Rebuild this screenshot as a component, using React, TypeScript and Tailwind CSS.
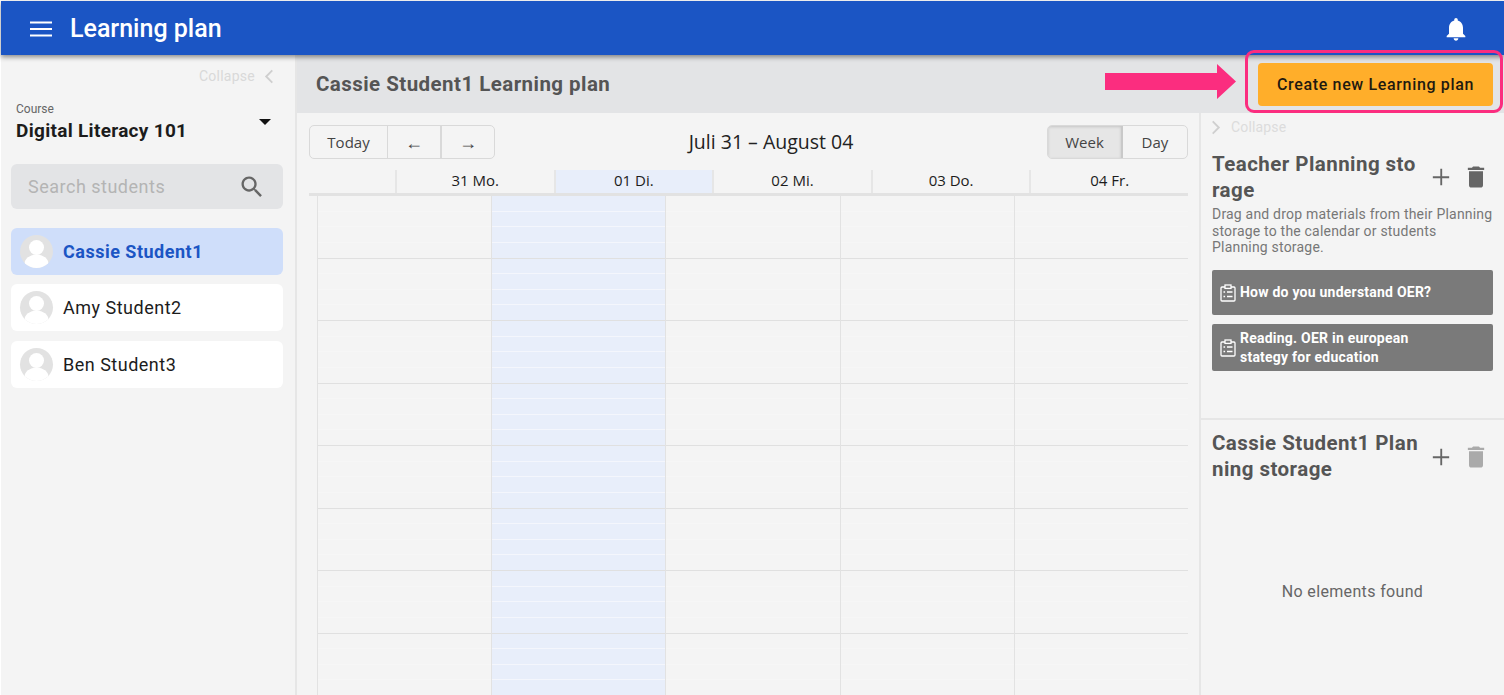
const slots = Array.from({ length: 36 });

function Person() {
  return (
    <span className="relative block w-[33px] h-[33px] rounded-full bg-[#e2e2e2] overflow-hidden shrink-0">
      <svg viewBox="0 0 33 33" className="w-[33px] h-[33px]" fill="#fff">
        <circle cx="16.5" cy="12.5" r="7.5" />
        <ellipse cx="16.5" cy="29" rx="12" ry="9.5" />
      </svg>
    </span>
  );
}

function Student({ name, active }: { name: string; active?: boolean }) {
  return (
    <div className={`flex items-center h-[47px] rounded-[6px] pl-[9px] gap-[10px] ${active ? "bg-[#cfdefa]" : "bg-white"}`}>
      <Person />
      <span className={`text-[18px] tracking-[0.5px] ${active ? "font-bold text-[#1b55c4]" : "text-[#1c1c1c]"}`}>{name}</span>
    </div>
  );
}

function Trash({ color }: { color: string }) {
  return (
    <svg viewBox="0 0 24 24" className="w-[28px] h-[28px]" fill={color}>
      <path d="M6 19c0 1.1.9 2 2 2h8c1.1 0 2-.9 2-2V7H6v12zM19 4h-3.5l-1-1h-5l-1 1H5v2h14V4z" />
    </svg>
  );
}

function Plus() {
  return (
    <svg viewBox="0 0 24 24" className="w-[28px] h-[28px]" fill="#666">
      <path d="M19 13h-6v6h-1.6v-6H5v-1.6h6.4V5H13v6.4h6z" />
    </svg>
  );
}

function Clipboard() {
  return (
    <svg viewBox="0 0 16 18" className="w-[16px] h-[18px] shrink-0" fill="none" stroke="#fff" strokeWidth="1.3">
      <rect x="1" y="3" width="14" height="14" rx="1" />
      <rect x="5" y="1" width="6" height="3.4" fill="#7a7a7a" />
      <path d="M3.5 8h1.6M7 8h5.5M3.5 12.5h1.6M7 12.5h5.5" />
    </svg>
  );
}

function Material({ children }: { children: React.ReactNode }) {
  return (
    <div className="flex items-center gap-[4px] bg-[#7a7a7a] rounded-[2px] px-[8px] pt-[5px] pb-[4px] min-h-[45px] text-white text-[14px] font-bold tracking-[0.23px] leading-[19px]">
      <Clipboard />
      <div>{children}</div>
    </div>
  );
}

function HeadCell({ label, today }: { label: string; today?: boolean }) {
  return (
    <div className={`flex-1 border-l-2 border-[#e6e6e6] text-center text-[15px] leading-[21px] pb-[2px] text-[#1c1c1c] ${today ? "bg-[#e8eefa]" : ""}`}>
      {label}
    </div>
  );
}

function DayCol({ today }: { today?: boolean }) {
  return (
    <div className={`flex-1 border-l border-[#e2e2e2] ${today ? "bg-[#e8eefa]" : ""}`}>
      {slots.map((_, i) => (
        <div
          key={i}
          className={`h-[15.625px] ${i % 4 === 3 ? "border-b border-[#e0e0e0]" : today ? "border-b border-[#f4f6fc]" : "border-b border-[#f6f6f6]"}`}
        />
      ))}
    </div>
  );
}

export default function App() {
  return (
    <div className="relative w-[1504px] h-[695px] overflow-hidden bg-white pl-px pt-px font-['Roboto',sans-serif]">
      <div className="h-full flex flex-col bg-[#f4f4f4]">
        {/* Top bar */}
        <header className="relative z-10 h-[54px] shrink-0 bg-[#1b55c4] flex items-center text-white pt-px pl-[29px] pr-[34px] shadow-[0_2px_5px_rgba(0,0,0,0.45)]">
          <svg viewBox="0 0 22 16" className="w-[22px] h-[16px]" fill="#fff">
            <rect y="0.5" width="22" height="2" />
            <rect y="7" width="22" height="2" />
            <rect y="13.5" width="22" height="2" />
          </svg>
          <span className="ml-[18px] text-[25px] font-medium">Learning plan</span>
          <svg viewBox="0 0 24 24" className="ml-auto w-[28px] h-[28px]" fill="#fff">
            <path d="M12 22c1.1 0 2-.9 2-2h-4c0 1.1.89 2 2 2zm6-6v-5c0-3.07-1.64-5.64-4.5-6.32V4c0-.83-.67-1.5-1.5-1.5s-1.5.67-1.5 1.5v.68C7.63 5.36 6 7.92 6 11v5l-2 2v1h16v-1l-2-2z" />
          </svg>
        </header>

        <div className="flex flex-1 min-h-0">
          {/* Left sidebar */}
          <aside className="w-[296px] shrink-0 border-r-2 border-[#e6e6e6] pl-[10px] pr-[12px]">
            <div className="flex items-center justify-end gap-[9px] h-[46px] pb-[3px] pr-[9px] text-[14px] tracking-[0.25px] text-[#d9d9d9]">
              Collapse
              <svg viewBox="0 0 10 16" className="w-[10px] h-[15px]" fill="none" stroke="#cfcfcf" strokeWidth="2">
                <path d="M8.5 1.5 2 8l6.5 6.5" />
              </svg>
            </div>
            <div className="flex justify-between pl-[5px] pr-[12px] h-[63px]">
              <div>
                <div className="text-[12px] leading-[16px] text-[#666]">Course</div>
                <div className="text-[19px] leading-[28px] font-bold tracking-[0.3px] text-[#1c1c1c]">Digital Literacy 101</div>
              </div>
              <div className="mt-[18px] w-0 h-0 border-l-[6.5px] border-r-[6.5px] border-t-[6px] border-l-transparent border-r-transparent border-t-[#111]" />
            </div>
            <div className="flex items-center justify-between h-[45px] rounded-[6px] bg-[#e3e4e6] pl-[17px] pr-[17px] text-[18px] tracking-[0.5px] text-[#b4b4b4]">
              Search students
              <svg viewBox="0 0 24 24" className="w-[28px] h-[28px]" fill="#666">
                <path d="M15.5 14h-.79l-.28-.27C15.41 12.59 16 11.11 16 9.5 16 5.91 13.09 3 9.5 3S3 5.91 3 9.5 5.91 16 9.5 16c1.61 0 3.09-.59 4.23-1.57l.27.28v.79l5 4.99L20.49 19l-4.99-5zm-6 0C7.01 14 5 11.99 5 9.5S7.01 5 9.5 5 14 7.01 14 9.5 11.99 14 9.5 14z" />
              </svg>
            </div>
            <div className="mt-[19px] flex flex-col gap-[9.25px]">
              <Student name="Cassie Student1" active />
              <Student name="Amy Student2" />
              <Student name="Ben Student3" />
            </div>
          </aside>

          <main className="flex-1 min-w-0 flex flex-col">
            {/* Title bar */}
            <div className="h-[58px] shrink-0 bg-[#e3e4e6] flex items-center justify-between pt-px pl-[19px] pr-[11px]">
              <h1 className="text-[20.5px] font-bold tracking-[0.45px] text-[#555]">Cassie Student1 Learning plan</h1>
              <button className="w-[235px] h-[43px] rounded-[4px] bg-[#ffae2a] text-[#1f1a10] text-[16px] font-medium tracking-[0.65px]">
                Create new Learning plan
              </button>
            </div>

            <div className="flex flex-1 min-h-0">
              {/* Calendar */}
              <section className="w-[904px] shrink-0 border-r-2 border-[#e6e6e6] pl-[12px] pr-[11px] pt-[12px] overflow-hidden font-['Open_Sans',sans-serif]">
                <div className="flex items-center justify-between h-[34px] text-[15px] text-[#444]">
                  <div className="flex h-full rounded-[5px] border border-[#d9d9d9]">
                    <div className="w-[77px] flex items-center justify-center">Today</div>
                    <div className="w-[53px] flex items-center justify-center border-l border-[#d9d9d9] text-[18px]">←</div>
                    <div className="w-[54px] flex items-center justify-center border-l-2 border-[#d9d9d9] text-[18px]">→</div>
                  </div>
                  <div className="text-[19.5px] text-[#222]">Juli 31 – August 04</div>
                  <div className="flex h-full rounded-[5px] border border-[#d9d9d9] overflow-hidden">
                    <div className="w-[75px] flex items-center justify-center bg-[#e6e6e6] border-r-2 border-[#c9c9c9] shadow-[inset_0_1px_3px_rgba(0,0,0,0.15)]">Week</div>
                    <div className="w-[64px] flex items-center justify-center">Day</div>
                  </div>
                </div>
                <div className="mt-[11px] flex border-b-[3px] border-[#e2e2e2]">
                  <div className="w-[86px] shrink-0" />
                  <HeadCell label="31 Mo." />
                  <HeadCell label="01 Di." today />
                  <HeadCell label="02 Mi." />
                  <HeadCell label="03 Do." />
                  <HeadCell label="04 Fr." />
                </div>
                <div className="flex pl-[8px]">
                  <DayCol />
                  <DayCol today />
                  <DayCol />
                  <DayCol />
                  <DayCol />
                </div>
              </section>

              {/* Right panel */}
              <aside className="flex-1 min-w-0 flex flex-col">
                <div className="h-[307px] shrink-0 border-b-2 border-[#e6e6e6] pl-[11px] pr-[11px]">
                  <div className="flex items-center gap-[10px] h-[28px] text-[14px] tracking-[0.15px] text-[#dcdcdc]">
                    <svg viewBox="0 0 10 16" className="-ml-[1px] w-[10px] h-[15px]" fill="none" stroke="#cfcfcf" strokeWidth="2">
                      <path d="M1.5 1.5 8 8l-6.5 6.5" />
                    </svg>
                    Collapse
                  </div>
                  <div className="flex justify-between mt-[10px]">
                    <h2 className="w-[210px] break-all text-[20.5px] leading-[26px] font-bold tracking-[0.45px] text-[#555]">Teacher Planning storage</h2>
                    <div className="flex gap-[7px] pr-[3px] pt-[12px]">
                      <Plus />
                      <Trash color="#666" />
                    </div>
                  </div>
                  <p className="mt-[3px] text-[14px] leading-[16.5px] tracking-[0.2px] text-[#777]">
                    Drag and drop materials from their Planning
                    <br />
                    storage to the calendar or students
                    <br />
                    Planning storage.
                  </p>
                  <div className="mt-[14px] flex flex-col gap-[9px]">
                    <Material>How do you understand OER?</Material>
                    <Material>
                      Reading. OER in european
                      <br />
                      stategy for education
                    </Material>
                  </div>
                </div>
                <div className="flex-1 pl-[11px] pr-[11px] pt-[10px]">
                  <div className="flex justify-between">
                    <h2 className="w-[210px] break-all text-[20.5px] leading-[26px] font-bold tracking-[0.45px] text-[#555]">Cassie Student1 Planning storage</h2>
                    <div className="flex gap-[7px] pr-[3px] pt-[13px]">
                      <Plus />
                      <Trash color="#aaa" />
                    </div>
                  </div>
                  <p className="mt-[98px] text-center text-[16px] tracking-[0.35px] text-[#666]">No elements found</p>
                </div>
              </aside>
            </div>
          </main>
        </div>
      </div>

      {/* Annotation */}
      <div className="absolute left-[1245px] top-[50px] w-[258px] h-[63px] rounded-[9px] border-[3px] border-[#fb2d7f] z-20" />
      <svg viewBox="0 0 131 35" className="absolute left-[1105px] top-[64px] w-[131px] h-[35px] z-20" fill="#fb2d7f">
        <path d="M0 9h112V0l19 17.5L112 35v-9H0z" />
      </svg>
    </div>
  );
}
